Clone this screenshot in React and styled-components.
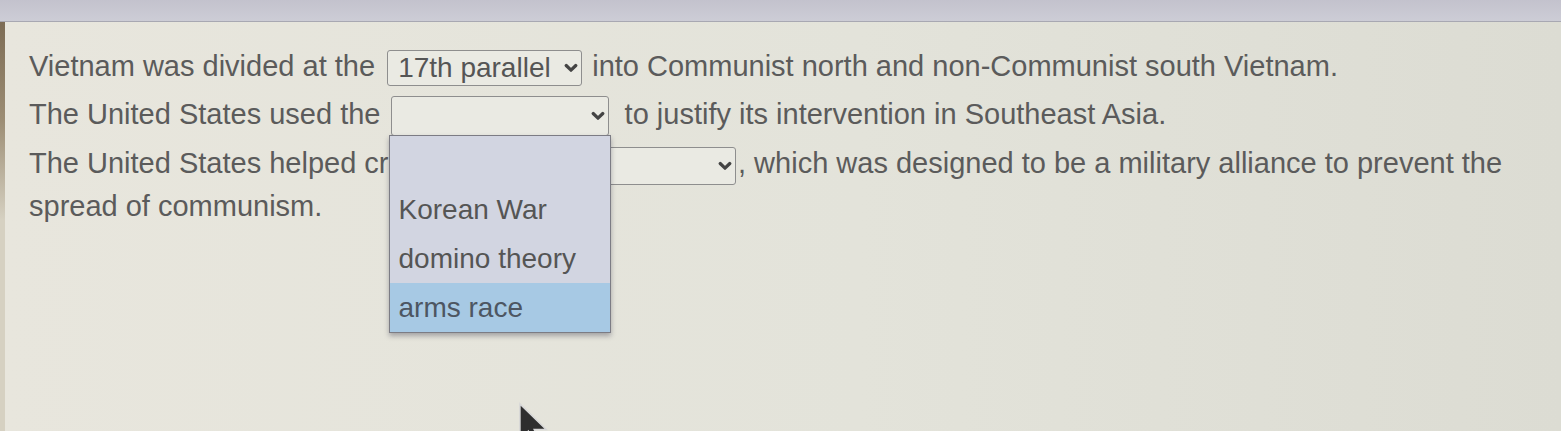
import React from "react";
import styled, { createGlobalStyle } from "styled-components";

const GlobalStyle = createGlobalStyle`
  html, body {
    margin: 0;
    padding: 0;
  }
  body {
    background: #e4e3db;
    font-family: "Liberation Sans", Arial, sans-serif;
  }
`;

const Screen = styled.div`
  position: relative;
  width: 1561px;
  height: 431px;
  overflow: hidden;
  background:
    linear-gradient(to bottom, #76654e 0, #9c8d74 120px, #d6d1c2 220px) left top / 5px 100% no-repeat,
    linear-gradient(to right, #e8e6dd 0%, #e3e3da 55%, #dcdcd3 100%);
`;

const TopBar = styled.div`
  height: 21px;
  background: linear-gradient(to bottom, #c3c2cd, #cdcdd6);
  border-bottom: 1px solid #a8a8b2;
`;

const Questions = styled.div`
  padding: 23px 0 0 29px;
  color: #5b5b5b;
  font-size: 29px;
  line-height: 42px;
`;

const Question = styled.div`
  width: 1515px;
  margin-bottom: 6px;
`;

const SelectBox = styled.span`
  position: relative;
  display: inline-flex;
  align-items: center;
  justify-content: space-between;
  box-sizing: border-box;
  width: ${(p) => p.$width}px;
  height: ${(p) => p.$height}px;
  margin: 0 ${(p) => p.$gap || 2}px 0 ${(p) => p.$lead ?? 4}px;
  padding: 0 3px 0 10px;
  vertical-align: middle;
  border: 1px solid #8e8e8e;
  border-radius: 3px;
  background: #eaeae3;
  color: #555;
  font-size: 28px;
  line-height: 1;
  white-space: nowrap;

  svg {
    flex-shrink: 0;
  }
`;

const OptionList = styled.ul`
  position: absolute;
  top: 100%;
  left: -3px;
  width: 220px;
  margin: 0;
  padding: 0;
  list-style: none;
  background: #d2d5e1;
  border: 1px solid #7c7c84;
  box-shadow: 0 3px 5px rgba(40, 40, 60, 0.35);
  z-index: 2;
`;

const Option = styled.li`
  height: 49px;
  line-height: 49px;
  padding-left: 9px;
  font-size: 28px;
  color: ${(p) => (p.$active ? "#4d5662" : "#555")};
  background: ${(p) => (p.$active ? "#a7c9e4" : "transparent")};
`;

const Pointer = styled.svg`
  position: absolute;
  left: 518px;
  top: 402px;
`;

const Chevron = () => (
  <svg width="14" height="10" viewBox="0 0 14 10">
    <path
      d="M2.2 2.5 L7 7.2 L11.8 2.5"
      fill="none"
      stroke="#444"
      strokeWidth="3.2"
      strokeLinecap="round"
      strokeLinejoin="round"
    />
  </svg>
);

function Select({ value = "", width, height, gap, lead, options, active }) {
  return (
    <SelectBox $width={width} $height={height} $gap={gap} $lead={lead}>
      <span>{value}</span>
      <Chevron />
      {options && (
        <OptionList>
          {options.map((opt, i) => (
            <Option key={i} $active={i === active}>
              {opt || "\u00a0"}
            </Option>
          ))}
        </OptionList>
      )}
    </SelectBox>
  );
}

export default function App() {
  return (
    <>
      <GlobalStyle />
      <Screen>
        <TopBar />
        <Questions>
          <Question>
            Vietnam was divided at the{" "}
            <Select value="17th parallel" width={195} height={36} /> into
            Communist north and non-Communist south Vietnam.
          </Question>
          <Question>
            The United States used the{" "}
            <Select
              width={218}
              height={40}
              gap={8}
              lead={2}
              options={["", "Korean War", "domino theory", "arms race"]}
              active={3}
            />{" "}
            to justify its intervention in Southeast Asia.
          </Question>
          <Question>
            The United States helped create{" "}
            <Select width={279} height={38} />, which was designed to be a
            military alliance to prevent the spread of communism.
          </Question>
        </Questions>
        <Pointer width="32" height="45" viewBox="0 0 17 24">
          <path
            d="M1 1 L1 20 L5.5 15.5 L9 23 L12 21.8 L8.6 14.6 L15 14.6 Z"
            fill="#2e2e2e"
            stroke="#d8d8d8"
            strokeWidth="0.8"
          />
        </Pointer>
      </Screen>
    </>
  );
}
